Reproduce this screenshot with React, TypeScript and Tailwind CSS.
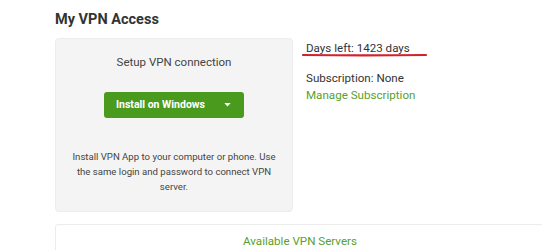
export default function App() {
  return (
    <div className="w-[542px] h-[250px] overflow-hidden bg-white pl-[55px] pt-[11px] font-['Roboto',sans-serif] text-[#333]">
      <h2 className="text-[14.5px] leading-[18px] font-bold text-[#333]">My VPN Access</h2>

      <div className="mt-[9px] flex gap-[13px]">
        {/* setup card */}
        <div className="w-[238px] h-[174px] shrink-0 rounded-[4px] border border-[#ececec] bg-[#f4f4f4] px-[14px] pt-[15px] text-center">
          <p className="text-[11.5px] leading-[16px] text-[#444]">Setup VPN connection</p>
          <div className="mt-[22px] flex justify-center">
            <button className="flex h-[26px] w-[140px] items-center justify-between rounded-[3px] bg-[#4a9a1e] pl-[12px] pr-[13px] text-[10.5px] font-bold text-white">
              <span>Install on Windows</span>
              <svg width="7" height="4" viewBox="0 0 8 5">
                <path d="M0 0 L8 0 L4 4.5 Z" fill="#fff" />
              </svg>
            </button>
          </div>
          <p className="mt-[31px] text-[9.6px] leading-[15px] text-[#444]">
            Install VPN App to your computer or phone. Use the same login and password to connect VPN server.
          </p>
        </div>

        {/* subscription info */}
        <div className="relative pt-[2px] text-[11.6px] leading-[16px]">
          <p className="text-[#333]">Days left: 1423 days</p>
          <svg className="absolute left-[-4px] top-[14px]" width="126" height="6" viewBox="0 0 126 6">
            <path d="M1 3 C30 3.4 80 3.6 124 3" stroke="#d0222c" strokeWidth="2.2" fill="none" strokeLinecap="round" />
          </svg>
          <p className="mt-[14px] text-[#333]">Subscription: None</p>
          <p className="mt-[1px] text-[#5aa02c]">Manage Subscription</p>
        </div>
      </div>

      <div className="mt-[12px] h-[40px] w-[490px] rounded-[3px] border border-[#ececec] pt-[8px] text-center text-[11.6px] leading-[16px] text-[#5aa02c]">
        Available VPN Servers
      </div>
    </div>
  );
}
